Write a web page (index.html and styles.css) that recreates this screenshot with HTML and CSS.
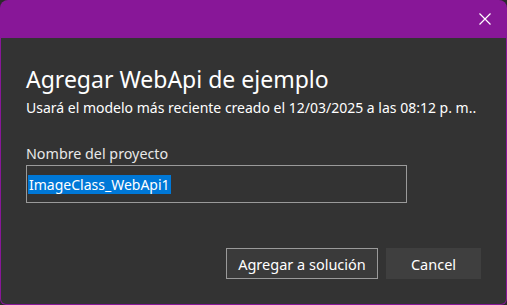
FILE: index.html
```html
<!DOCTYPE html>
<html lang="es">
<head>
  <meta charset="UTF-8">
  <meta name="viewport" content="width=device-width, initial-scale=1.0">
  <title>Agregar WebApi de ejemplo</title>
  <link rel="stylesheet" href="styles.css">
</head>
<body>
  <div id="dialog">
    <div class="titlebar">
      <span class="close">
        <svg width="12" height="12" viewBox="0 0 12 12">
          <path d="M0.5 0.5 L11.5 11.5 M11.5 0.5 L0.5 11.5" stroke="#ffffff" stroke-width="1.2" fill="none"/>
        </svg>
      </span>
    </div>
    <div class="content">
      <h1>Agregar WebApi de ejemplo</h1>
      <p class="sub">Usará el modelo más reciente creado el 12/03/2025 a las 08:12 p. m..</p>

      <label class="label">Nombre del proyecto</label>
      <div class="field"><span class="selected">ImageClass_WebApi1</span></div>

      <div class="buttons">
        <button class="btn primary">Agregar a solución</button>
        <button class="btn">Cancel</button>
      </div>
    </div>
  </div>
</body>
</html>
```

FILE: styles.css
```css
html, body {
  margin: 0;
  padding: 0;
  background: #2b2b2b;
}
body {
  font-family: "Noto Sans", "Open Sans", sans-serif;
  color: #ffffff;
}
#dialog {
  width: 507px;
  height: 305px;
  box-sizing: border-box;
  background: #881798;
  border-radius: 8px 8px 6px 6px;
  padding: 0 1px 1px 1px;
  display: flex;
  flex-direction: column;
}
.titlebar {
  height: 38px;
  display: flex;
  justify-content: flex-end;
  align-items: center;
}
.close {
  width: 12px;
  height: 12px;
  margin-right: 15px;
  display: flex;
}
.content {
  flex: 1;
  background: #333333;
  border-radius: 0 0 5px 5px;
  padding: 0 25px;
}
h1 {
  font-weight: normal;
  font-size: 23px;
  margin: 26px 0 0 0;
  line-height: 30px;
}
.sub {
  font-size: 14px;
  margin: 5px 0 0 0;
  line-height: 18px;
  white-space: nowrap;
}
.label {
  display: block;
  font-size: 14.3px;
  margin-top: 28px;
  line-height: 18px;
  color: #e8e8e8;
}
.field {
  width: 381px;
  height: 38px;
  box-sizing: border-box;
  border: 1px solid #9a9a9a;
  margin-top: 2px;
  padding: 8px 1px;
  display: flex;
  align-items: center;
}
.selected {
  background: #0078d7;
  color: #ffffff;
  font-size: 14px;
  line-height: 19px;
  padding: 0 1px;
}
.buttons {
  display: flex;
  justify-content: flex-end;
  gap: 8px;
  margin-top: 45px;
}
.btn {
  font-family: inherit;
  font-size: 14.5px;
  color: #ffffff;
  background: #3f3f3f;
  border: 1px solid #3f3f3f;
  height: 31px;
  padding: 0;
  width: 95px;
}
.btn.primary {
  background: #3a3a3a;
  border-color: #9a9a9a;
  width: 152px;
}
```
